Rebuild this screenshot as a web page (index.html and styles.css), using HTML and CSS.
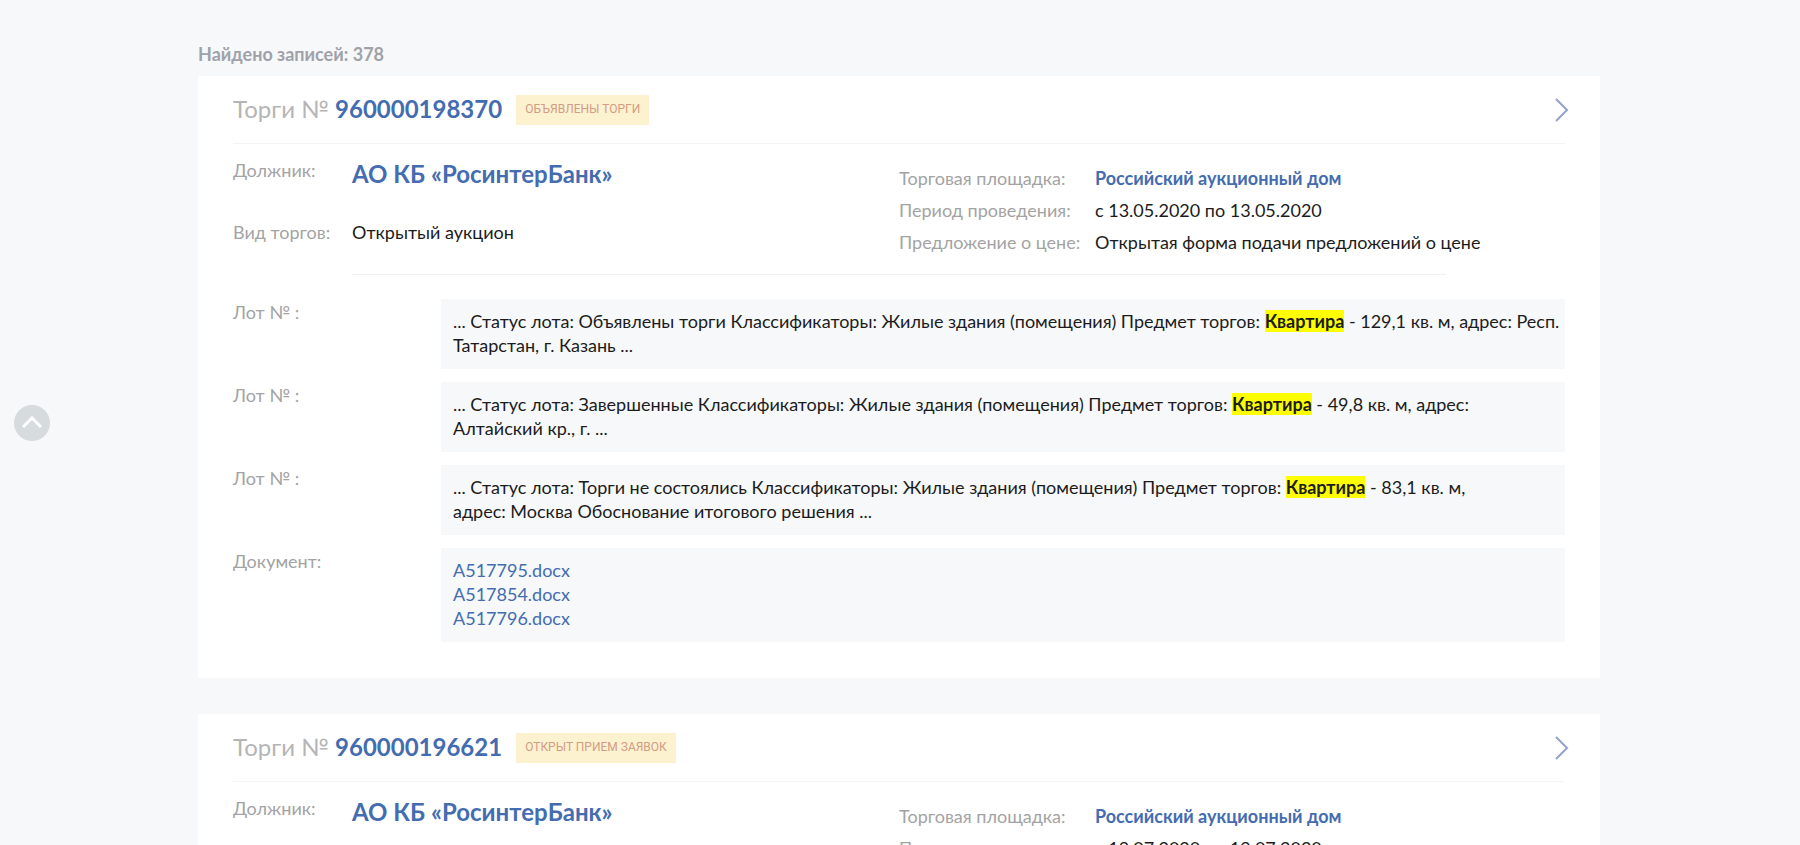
FILE: index.html
```html
<!DOCTYPE html>
<html lang="ru">
<head>
  <meta charset="UTF-8" />
  <meta name="viewport" content="width=device-width, initial-scale=1.0"/>
  <title>Результаты поиска</title>
  <link rel="stylesheet" href="styles.css">
</head>
<body>

  <main class="results">
    <p class="results-count">Найдено записей: 378</p>

    <article class="card">
      <header class="card-header">
        <h2 class="card-title">Торги № <a href="#">960000198370</a></h2>
        <span class="status">Объявлены торги</span>
        <a href="#" class="card-open" aria-label="Открыть торги">
          <svg width="14" height="24" viewBox="0 0 14 24"><path d="M1 1 L12 12 L1 23" /></svg>
        </a>
      </header>

      <div class="card-info">
        <dl class="info-main">
          <dt>Должник:</dt>
          <dd class="debtor"><a href="#">АО КБ «РосинтерБанк»</a></dd>
          <dt>Вид торгов:</dt>
          <dd>Открытый аукцион</dd>
        </dl>
        <dl class="info-side">
          <dt>Торговая площадка:</dt>
          <dd><a href="#" class="platform">Российский аукционный дом</a></dd>
          <dt>Период проведения:</dt>
          <dd>с 13.05.2020 по 13.05.2020</dd>
          <dt>Предложение о цене:</dt>
          <dd>Открытая форма подачи предложений о цене</dd>
        </dl>
      </div>

      <dl class="lots">
        <dt>Лот № :</dt>
        <dd>... Статус лота: Объявлены торги Классификаторы: Жилые здания (помещения) Предмет торгов: <mark>Квартира</mark> - 129,1 кв. м, адрес: Респ. Татарстан, г. Казань ...</dd>
        <dt>Лот № :</dt>
        <dd>... Статус лота: Завершенные Классификаторы: Жилые здания (помещения) Предмет торгов: <mark>Квартира</mark> - 49,8 кв. м, адрес: Алтайский&nbsp;кр., г. ...</dd>
        <dt>Лот № :</dt>
        <dd>... Статус лота: Торги не состоялись Классификаторы: Жилые здания (помещения) Предмет торгов: <mark>Квартира</mark> - 83,1 кв. м, адрес:&nbsp;Москва Обоснование итогового решения ...</dd>
        <dt>Документ:</dt>
        <dd class="docs">
          <a href="#">A517795.docx</a>
          <a href="#">A517854.docx</a>
          <a href="#">A517796.docx</a>
        </dd>
      </dl>
    </article>

    <article class="card">
      <header class="card-header">
        <h2 class="card-title">Торги № <a href="#">960000196621</a></h2>
        <span class="status">Открыт прием заявок</span>
        <a href="#" class="card-open" aria-label="Открыть торги">
          <svg width="14" height="24" viewBox="0 0 14 24"><path d="M1 1 L12 12 L1 23" /></svg>
        </a>
      </header>

      <div class="card-info">
        <dl class="info-main">
          <dt>Должник:</dt>
          <dd class="debtor"><a href="#">АО КБ «РосинтерБанк»</a></dd>
        </dl>
        <dl class="info-side">
          <dt>Торговая площадка:</dt>
          <dd><a href="#" class="platform">Российский аукционный дом</a></dd>
          <dt>Период проведения:</dt>
          <dd>с 19.07.2020 по 19.07.2020</dd>
        </dl>
      </div>
    </article>
  </main>

  <!-- Scroll to top -->
  <button type="button" class="to-top" aria-label="Наверх">
    <svg width="20" height="12" viewBox="0 0 20 12"><path d="M1 11 L10 2 L19 11" /></svg>
  </button>

</body>
</html>
```
FILE: styles.css
```css
* {
  box-sizing: border-box;
}

body {
  margin: 0;
  height: 100vh;
  overflow: hidden;
  background: #f6f8fa;
  color: #1c1c1c;
  font-family: Lato, "Open Sans", sans-serif;
  font-size: 18px;
  line-height: 24px;
}

a {
  color: #446cb0;
  text-decoration: none;
}

dl,
dd {
  margin: 0;
}

dt {
  color: #a3a3a3;
}

.results {
  margin: 0 200px 0 11%;
  padding-top: 42px;
}

.results-count {
  margin: 0 0 10px;
  color: #9fa2a8;
  font-weight: bold;
}

.card {
  margin-bottom: 36px;
  padding: 0 35px 36px;
  background: #fff;
}

/* Card header */
.card-header {
  display: flex;
  align-items: center;
  height: 68px;
  border-bottom: 1px solid #f3f4f6;
}

.card-title {
  margin: 0;
  padding-bottom: 2px;
  color: #b5b5b5;
  font-size: 24px;
  font-weight: normal;
}

.card-title a {
  font-weight: bold;
}

.status {
  margin-left: 14px;
  padding: 0 9px 2px;
  background: #fdf2d0;
  color: #d39c85;
  font-family: Roboto, sans-serif;
  font-size: 12px;
  line-height: 28px;
  text-transform: uppercase;
}

.card-open {
  margin: 0 -4px 0 auto;
}

.card-open svg {
  display: block;
}

svg path {
  fill: none;
  stroke: #8fa3cb;
  stroke-width: 2;
}

/* Debtor and platform */
.card-info {
  display: flex;
  position: relative;
  min-height: 131px;
}

.card-info::after {
  content: "";
  position: absolute;
  left: 119px;
  right: 119px;
  bottom: 0;
  border-bottom: 1px solid #f0f1f3;
}

.info-main {
  display: grid;
  grid-template-columns: 119px 1fr;
  grid-auto-rows: 24px;
  row-gap: 38px;
  width: 50%;
  padding-top: 14px;
}

.debtor {
  padding-top: 4px;
  font-size: 24px;
  font-weight: bold;
}

.info-side {
  display: grid;
  grid-template-columns: 196px 1fr;
  grid-auto-rows: 24px;
  row-gap: 8px;
  width: 50%;
  padding-top: 22px;
}

.platform {
  font-weight: bold;
}

/* Lots */
.lots {
  display: grid;
  grid-template-columns: 208px 1fr;
  row-gap: 13px;
  padding-top: 24px;
}

.lots dt {
  padding-top: 1px;
}

.lots dd {
  padding: 10px 2px 12px 12px;
  background: #f6f8fa;
}

mark {
  background: #ff0;
  color: #1c1c1c;
  font-weight: bold;
}

.docs a {
  display: block;
}

.to-top {
  display: flex;
  align-items: center;
  justify-content: center;
  position: fixed;
  left: 14px;
  top: 50%;
  width: 36px;
  height: 36px;
  margin-top: -18px;
  padding: 0 0 2px;
  border: 0;
  border-radius: 50%;
  background: #d6dcdd;
  cursor: pointer;
}

.to-top path {
  stroke: #fff;
  stroke-width: 3;
}
```
